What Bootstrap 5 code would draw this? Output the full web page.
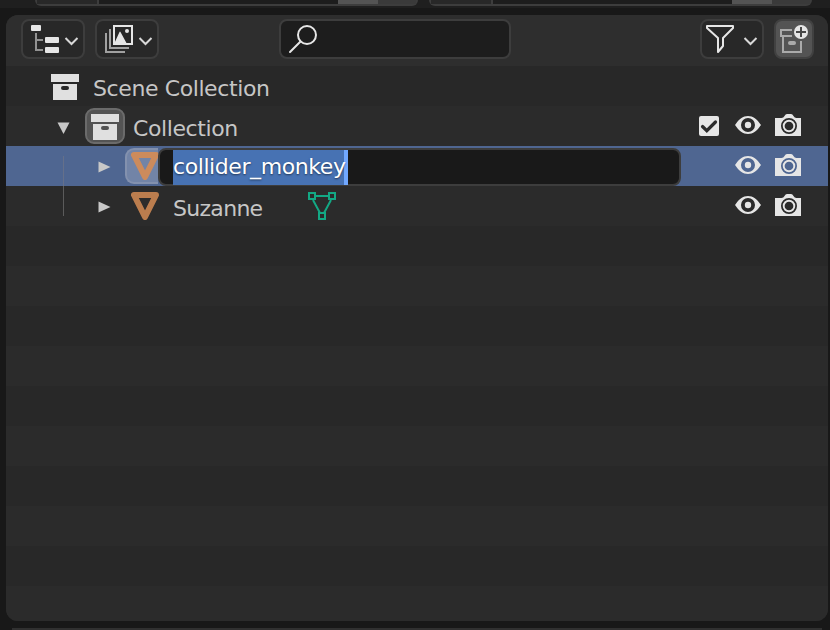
<!DOCTYPE html>
<html lang="en">
<head>
<meta charset="utf-8">
<title>Outliner</title>
<meta name="viewport" content="width=device-width, initial-scale=1">
<link href="https://cdn.jsdelivr.net/npm/bootstrap@5.3.0/dist/css/bootstrap.min.css" rel="stylesheet">
<style>
body{background:#181818;color:#c6c6c6;font-family:"DejaVu Sans",sans-serif;font-size:22px;height:630px}
svg{display:block;flex:none}
.strip{height:8px;background:#1f1f1f;margin-bottom:7px}
.tab-end{height:6px;width:383px;border:2px solid #3d3d3d;border-top:0;border-radius:0 0 8px 8px;background:#1d1d1d}
.tab-end>i{height:4px;display:block}
.seg-a{width:62px;background:#282828;border-right:2px solid #3d3d3d}
.seg-b{width:40px;background:#545454}
.seg-c{width:38px;background:#3a3a3a}
.outliner{width:822px;height:606px;margin-left:6px;border-radius:12px;background:#2b2b2b}
.tool-head{height:51px;padding:4px 14px 0 15px;background:#2e2e2e}
.tool{height:40px;width:64px;border:2px solid #3d3d3d;border-radius:8px;background:#282828;padding:0}
.tool-sq{width:40px;background:#545454;border-color:#414141}
.find{width:232px;background:#1d1d1d}
.line{height:40px;background:#2b2b2b}
.line:nth-child(even){background:#282828}
.line.active{background:#4f6691}
.label{line-height:40px;padding-top:6px;white-space:nowrap;letter-spacing:-.4px}
.label-obj{width:135px;letter-spacing:-.7px}
.chip{width:40px;height:36px;border:2px solid #6b6b6b;border-radius:9px;background:#545454}
.chip-obj{width:33px;border-color:#8391ae;border-right:0;border-radius:9px 0 0 9px;background:#7284a7}
.rename{width:523px;height:38px;border:2px solid #3d3d3d;border-radius:8px;background:#191919;padding-left:13px;color:#fff;margin-top:2px}
.picked{height:35px;line-height:34px;background:#4772b3;border-right:4px solid #71a8ff;width:175px;text-shadow:0 1px 2px #0008;letter-spacing:-.42px;white-space:nowrap}
.toggles{height:20px;margin-right:27px;color:#e6e6e6}
.eye{margin-right:14px}
.cam{margin-top:-2px}
.guide{margin-left:56px}
.next-area{height:2px;margin:7px 8px 0 12px;background:#303030}
</style>
</head>
<body class="overflow-hidden m-0">
<svg width="0" height="0" class="position-absolute">
<symbol id="box" viewBox="0 0 28 26"><path fill="#e0e0e0" fill-rule="evenodd" d="M0 0h28v8H0zM2 10h24v16H2zM12 12a2 2 0 0 0 0 4h4a2 2 0 0 0 0-4z"/></symbol>
<symbol id="eye" viewBox="0 0 26 18"><path fill="currentColor" fill-rule="evenodd" d="M0 9C4 3 8 0 13 0s9 3 13 9c-4 6-8 9-13 9S4 15 0 9zM13 2a7 7 0 1 0 0 14a7 7 0 0 0 0-14z"/><circle cx="13" cy="9" r="3.2" fill="currentColor"/></symbol>
<symbol id="cam" viewBox="0 0 26 22"><path fill="currentColor" fill-rule="evenodd" d="M0 4h6.500Q8.500 4 9.500 2Q10.500 0 12 0h4Q17.500 0 18.500 2Q19.500 4 21.500 4H26v18H0zM14 4a8 8 0 1 0 0 16a8 8 0 0 0 0-16z"/><circle cx="14" cy="12" r="5.300" fill="none" stroke="currentColor" stroke-width="1.900"/></symbol>
<symbol id="cone" viewBox="0 0 28 28"><path fill="none" stroke="currentColor" stroke-width="6" stroke-linejoin="round" d="M3 3h22L14 25z"/></symbol>
<symbol id="chev" viewBox="0 0 14 9"><path fill="none" stroke="#d8d8d8" stroke-width="2" d="M1 1l6 6l6-6"/></symbol>
<symbol id="right" viewBox="0 0 13 12"><path fill="#c8c8c8" d="M.5.5L12.500 6L.5 11.500z"/></symbol>
</svg>
<div class="strip d-flex">
 <div class="tab-end d-flex" style="margin-left:35px"><i class="seg-a"></i><i class="flex-grow-1"></i><i class="seg-b"></i><i class="seg-c"></i></div>
 <div class="tab-end d-flex" style="margin-left:11px"><i class="seg-a"></i><i class="flex-grow-1"></i><i class="seg-b"></i><i class="seg-c"></i></div>
</div>
<main class="outliner overflow-hidden">
 <header class="tool-head d-flex">
  <button class="tool d-flex" aria-label="Editor type">
   <svg width="60" height="36" viewBox="23 21 60 36"><path d="M36 33v17h7M36 40h7" fill="none" stroke="#929292" stroke-width="2"/><g fill="#e6e6e6"><rect x="31" y="25" width="10" height="6" rx="1"/><rect x="45" y="37" width="14" height="6" rx="1"/><rect x="45" y="47" width="14" height="6" rx="1"/></g><use href="#chev" x="64.500" y="37" width="14" height="9"/></svg>
  </button>
  <button class="tool d-flex" style="margin-left:10px" aria-label="Display mode">
   <svg width="60" height="36" viewBox="97 21 60 36"><path d="M106 33v19h19M110 29v19h19" fill="none" stroke="#a0a0a0" stroke-width="2"/><path d="M114 26h18v18h-18z" fill="#282828" stroke="#e6e6e6" stroke-width="2"/><path d="M114 44l5.500-12q.5-1 1 0l6.500 12z" fill="#e6e6e6"/><circle cx="127" cy="31" r="2" fill="#e6e6e6"/><use href="#chev" x="138.500" y="37" width="14" height="9"/></svg>
  </button>
  <div class="tool find mx-auto" role="search">
   <svg width="40" height="36" viewBox="281 21 40 36"><g fill="none" stroke="#e6e6e6" stroke-width="2"><circle cx="307" cy="35" r="9"/><path d="M300.500 41.500L290 52" stroke-linecap="round"/></g></svg>
  </div>
  <div class="d-flex" style="gap:10px;margin-left:69px">
  <button class="tool d-flex" aria-label="Filter">
   <svg width="60" height="36" viewBox="702 21 60 36"><path d="M707 26h26v2l-10 10v8l-5 6V38l-11-10z" fill="none" stroke="#e6e6e6" stroke-width="2" stroke-linejoin="round"/><use href="#chev" x="743.500" y="37" width="14" height="9"/></svg>
  </button>
  <button class="tool tool-sq d-flex" aria-label="New collection">
   <svg width="36" height="36" viewBox="776 21 36 36"><path d="M792 30h-11v6h11M783 37v15h18V41" fill="none" stroke="#aaa" stroke-width="2"/><rect x="788" y="41" width="8" height="4" rx="2" fill="#aaa"/><circle cx="801" cy="32" r="7" fill="#e6e6e6"/><path d="M796 32h10M801 27v10" stroke="#484848" stroke-width="2"/></svg>
  </button>
  </div>
 </header>
 <div class="line d-flex align-items-center">
  <svg width="28" height="26" style="margin:2px 14px 0 45px"><use href="#box"/></svg>
  <span class="label">Scene Collection</span>
 </div>
 <div class="line d-flex align-items-center">
  <svg width="13" height="12" viewBox="0 0 13 12" style="margin:3px 15px 0 51px"><path fill="#c8c8c8" d="M.5.5h12L6.500 12z"/></svg>
  <div class="chip d-flex align-items-center justify-content-center me-2"><svg width="28" height="26" style="margin-top:2px"><use href="#box"/></svg></div>
  <span class="label">Collection</span>
  <div class="toggles d-flex ms-auto">
   <svg width="20" height="20" class="me-3"><rect width="20" height="20" rx="2" fill="#e6e6e6"/><path d="M3.500 10.500l4.300 4.200L16.500 6" fill="none" stroke="#2b2b2b" stroke-width="3.200" stroke-linecap="round"/></svg>
   <svg class="eye" width="26" height="18"><use href="#eye"/></svg><svg class="cam" width="26" height="22"><use href="#cam"/></svg>
  </div>
 </div>
 <div class="line active d-flex align-items-center">
  <svg class="guide" width="2" height="40"><path d="M1.500 10v30" stroke="#65708a"/></svg>
  <svg width="13" height="12" style="margin:2px 14px 0 34px"><use href="#right"/></svg>
  <div class="chip chip-obj"><svg width="28" height="28" style="margin:2px 0 0 4px;color:#cc8b5c"><use href="#cone"/></svg></div>
  <div class="rename"><div class="picked">collider_monkey</div></div>
  <div class="toggles d-flex ms-auto"><svg class="eye" width="26" height="18"><use href="#eye"/></svg><svg class="cam" width="26" height="22"><use href="#cam"/></svg></div>
 </div>
 <div class="line d-flex align-items-center">
  <svg class="guide" width="2" height="40"><path d="M1.500 0v30" stroke="#5b5b5b"/></svg>
  <svg width="13" height="12" style="margin:2px 20px 0 34px"><use href="#right"/></svg>
  <svg width="28" height="28" style="color:#bb7d4e;margin-right:14px"><use href="#cone"/></svg>
  <span class="label label-obj">Suzanne</span>
  <svg width="28" height="28"><g fill="none" stroke="#13a884" stroke-width="2"><path d="M1 1h6v6H1zM21 1h6v6h-6zM11 21h6v6h-6zM7 4h14M5 8l7 13M23 8l-7 13"/></g></svg>
  <div class="toggles d-flex ms-auto"><svg class="eye" width="26" height="18"><use href="#eye"/></svg><svg class="cam" width="26" height="22"><use href="#cam"/></svg></div>
 </div>
 <div class="line"></div><div class="line"></div><div class="line"></div><div class="line"></div><div class="line"></div>
 <div class="line"></div><div class="line"></div><div class="line"></div><div class="line"></div><div class="line"></div>
</main>
<div class="next-area"></div>
<script src="https://cdn.jsdelivr.net/npm/bootstrap@5.3.0/dist/js/bootstrap.bundle.min.js"></script>
</body>
</html>
